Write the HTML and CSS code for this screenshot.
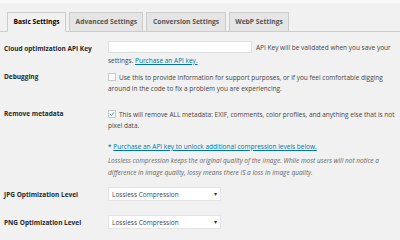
FILE: index.html
```html
<!DOCTYPE html>
<html lang="en">
<head>
  <meta charset="UTF-8">
  <title>Image Optimization Settings</title>
  <link rel="stylesheet" href="styles.css">
</head>
<body>
  <div class="topbar"></div>
  <div class="wrap">
    <nav class="tabs">
      <a class="tab active">Basic Settings</a>
      <a class="tab">Advanced Settings</a>
      <a class="tab">Conversion Settings</a>
      <a class="tab">WebP Settings</a>
    </nav>

    <div class="form">
      <div class="row row-api">
        <div class="label">Cloud optimization API Key</div>
        <div class="field">
          <div class="inline">
            <span class="input"></span>
            <span class="note">API Key will be validated when you save your</span>
          </div>
          <p class="text">settings. <a class="link">Purchase an API key.</a></p>
        </div>
      </div>

      <div class="row row-debug">
        <div class="label">Debugging</div>
        <div class="field">
          <p class="text"><span class="check"></span>Use this to provide information for support purposes, or if you feel comfortable digging around in the code to fix a problem you are experiencing.</p>
        </div>
      </div>

      <div class="row row-meta">
        <div class="label">Remove metadata</div>
        <div class="field">
          <p class="text"><span class="check checked">
            <svg viewBox="0 0 10 10" width="8" height="8"><path d="M2 5.2 L4.2 7.4 L8.3 2.2" fill="none" stroke="#1e8cbe" stroke-width="1.6"/></svg>
          </span>This will remove ALL metadata: EXIF, comments, color profiles, and anything else that is not pixel data.</p>
        </div>
      </div>

      <div class="row row-levels">
        <div class="label"></div>
        <div class="field">
          <p class="text">* <a class="link">Purchase an API key to unlock additional compression levels below.</a></p>
          <p class="desc">Lossless compression keeps the original quality of the image. While most users will not notice a difference in image quality, lossy means there IS a loss in image quality.</p>
        </div>
      </div>

      <div class="row row-select">
        <div class="label">JPG Optimization Level</div>
        <div class="field">
          <div class="select">Lossless Compression <span class="arrow">&#9662;</span></div>
        </div>
      </div>

      <div class="row row-select">
        <div class="label">PNG Optimization Level</div>
        <div class="field">
          <div class="select">Lossless Compression <span class="arrow">&#9662;</span></div>
        </div>
      </div>
    </div>
  </div>
</body>
</html>
```

FILE: styles.css
```css
body {
  margin: 0;
  background: #f1f1f1;
  font-family: "Open Sans", "Noto Sans", sans-serif;
  font-size: 6.5px;
  color: #444;
}

.topbar {
  height: 3px;
  background: #fafafa;
}

.wrap {
  padding: 9px 0 0 4px;
}

.tabs {
  display: flex;
  gap: 3px;
  border-bottom: 1px solid #ccc;
  margin-left: -4px;
  padding-left: 7px;
}

.tab {
  display: block;
  padding: 0 5.5px;
  height: 18px;
  line-height: 18px;
  font-size: 6.7px;
  font-weight: bold;
  color: #555;
  background: #e5e5e5;
  border: 1px solid #ccc;
  border-bottom: none;
  margin-bottom: -1px;
}

.tab.active {
  background: #f1f1f1;
  color: #000;
  border-bottom: 1px solid #f1f1f1;
}

.row {
  display: grid;
  grid-template-columns: 104px 1fr;
}

.label {
  font-weight: bold;
  color: #23282d;
  font-size: 6.5px;
}

.text, .desc {
  margin: 0;
  line-height: 11px;
}

.desc {
  font-style: italic;
  color: #666;
  line-height: 12px;
  margin-top: 3px;
}

.link {
  color: #0073aa;
  text-decoration: underline;
}

.row-api {
  margin-top: 9px;
}

.row-api .label {
  padding-top: 3px;
}

.inline {
  display: flex;
  align-items: center;
  gap: 4px;
}

.input {
  width: 144px;
  height: 12px;
  background: #fff;
  border: 1px solid #e0e0e0;
  box-sizing: border-box;
}

.row-api .text {
  margin-top: 2px;
}

.row-debug {
  margin-top: 6px;
}

.row-meta {
  margin-top: 15px;
}

.check {
  display: inline-flex;
  align-items: center;
  justify-content: center;
  width: 8px;
  height: 8px;
  margin-right: 3px;
  vertical-align: -1px;
  background: #fff;
  border: 1px solid #c9c9c9;
  box-sizing: border-box;
}

.row-levels {
  margin-top: 10px;
}

.row-select {
  margin-top: 8px;
  align-items: center;
}

.row-select + .row-select {
  margin-top: 14px;
}

.select {
  display: flex;
  justify-content: space-between;
  align-items: center;
  width: 113px;
  height: 14px;
  padding: 0 3px;
  box-sizing: border-box;
  background: #fff;
  border: 1px solid #e4e4e4;
}

.arrow {
  font-size: 6px;
  color: #333;
}
```
